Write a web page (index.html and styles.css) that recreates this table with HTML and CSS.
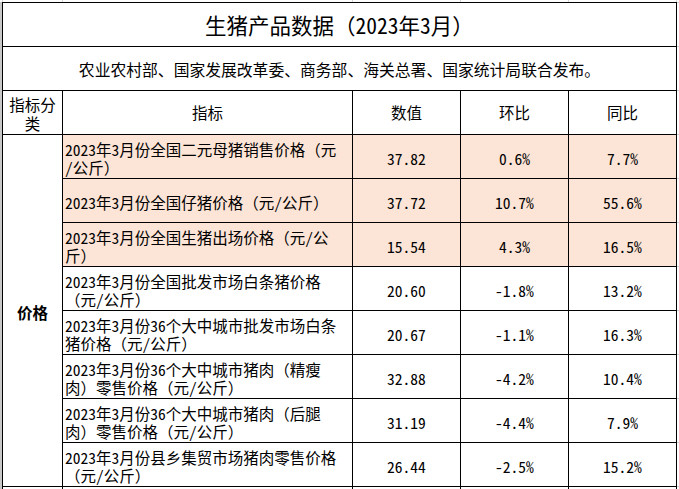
FILE: index.html
```html
<!DOCTYPE html>
<html lang="zh-CN">
<head>
<meta charset="utf-8">
<title>生猪产品数据（2023年3月）</title>
<link rel="stylesheet" href="styles.css">
</head>
<body>
<div class="page">
  <div class="corner"></div>
  <div class="topstrip">
    <span></span><span></span><span></span><span></span><span></span>
  </div>
  <div class="corner"></div>
  <div class="leftstrip"></div>
  <div class="sheet">
    <div class="cell title">生猪产品数据（2023年3月）</div>
    <div class="cell subtitle">农业农村部、国家发展改革委、商务部、海关总署、国家统计局联合发布。</div>

    <div class="cell center head">指标分<br>类</div>
    <div class="cell center">指标</div>
    <div class="cell center">数值</div>
    <div class="cell center">环比</div>
    <div class="cell center">同比</div>

    <div class="cell center category">价格</div>

    <div class="cell text pink">2023年3月份全国二元母猪销售价格（元<br>/公斤）</div>
    <div class="cell num pink">37.82</div>
    <div class="cell num pink">0.6%</div>
    <div class="cell num pink">7.7%</div>

    <div class="cell text pink">2023年3月份全国仔猪价格（元/公斤）</div>
    <div class="cell num pink">37.72</div>
    <div class="cell num pink">10.7%</div>
    <div class="cell num pink">55.6%</div>

    <div class="cell text pink">2023年3月份全国生猪出场价格（元/公<br>斤）</div>
    <div class="cell num pink">15.54</div>
    <div class="cell num pink">4.3%</div>
    <div class="cell num pink">16.5%</div>

    <div class="cell text">2023年3月份全国批发市场白条猪价格<br>（元/公斤）</div>
    <div class="cell num">20.60</div>
    <div class="cell num">-1.8%</div>
    <div class="cell num">13.2%</div>

    <div class="cell text">2023年3月份36个大中城市批发市场白条<br>猪价格（元/公斤）</div>
    <div class="cell num">20.67</div>
    <div class="cell num">-1.1%</div>
    <div class="cell num">16.3%</div>

    <div class="cell text">2023年3月份36个大中城市猪肉（精瘦<br>肉）零售价格（元/公斤）</div>
    <div class="cell num">32.88</div>
    <div class="cell num">-4.2%</div>
    <div class="cell num">10.4%</div>

    <div class="cell text">2023年3月份36个大中城市猪肉（后腿<br>肉）零售价格（元/公斤）</div>
    <div class="cell num">31.19</div>
    <div class="cell num">-4.4%</div>
    <div class="cell num">7.9%</div>

    <div class="cell text">2023年3月份县乡集贸市场猪肉零售价格<br>（元/公斤）</div>
    <div class="cell num">26.44</div>
    <div class="cell num">-2.5%</div>
    <div class="cell num">15.2%</div>

    <div class="cell"></div>
    <div class="cell"></div>
    <div class="cell"></div>
    <div class="cell"></div>
    <div class="cell"></div>
  </div>
  <div class="rightstrip"></div>
</div>
</body>
</html>
```

FILE: styles.css
```css
html, body {
  margin: 0;
  padding: 0;
  background: #fff;
  overflow: hidden;
}

body {
  font-family: "Noto Sans Mono CJK SC", "Noto Sans CJK SC", sans-serif;
  color: #000;
  font-size: 15.5px;
  line-height: 18.5px;
}

.page {
  display: grid;
  grid-template-columns: 2px 675px 2px;
  grid-template-rows: 2px auto;
  height: 489px;
  overflow: hidden;
}

.leftstrip {
  background: #c8c8c8;
}

.rightstrip {
  background: repeating-linear-gradient(to bottom, #d0d0d0 0 1px, transparent 1px 44px);
}

.topstrip {
  display: grid;
  grid-template-columns: 59px 289px 107px 107px 107px;
  column-gap: 1px;
  padding: 0 1px;
  background: #d6d6d6;
}

.topstrip span {
  background: #fff;
}

.sheet {
  display: grid;
  grid-template-columns: 59px 289px 107px 107px 107px;
  grid-auto-rows: 43px;
  gap: 1px;
  background: #000;
  border: 1px solid #000;
  align-self: start;
}

.cell {
  background: #fff;
  display: flex;
  align-items: center;
  overflow: hidden;
  white-space: nowrap;
}

.title {
  grid-column: 1 / -1;
  justify-content: center;
  font-size: 21.5px;
  padding-top: 1px;
}

.subtitle {
  grid-column: 1 / -1;
  justify-content: center;
  font-size: 15.8px;
  padding-top: 3px;
}

.center {
  justify-content: center;
  text-align: center;
}

.head {
  line-height: 19px;
  padding-top: 2px;
}

.category {
  grid-row: span 8;
  font-weight: 700;
  padding-top: 3px;
}

.text {
  padding: 3px 0 0 2px;
}

.num {
  justify-content: center;
  padding-top: 3px;
}

.pink {
  background: #fce4d6;
}
```
